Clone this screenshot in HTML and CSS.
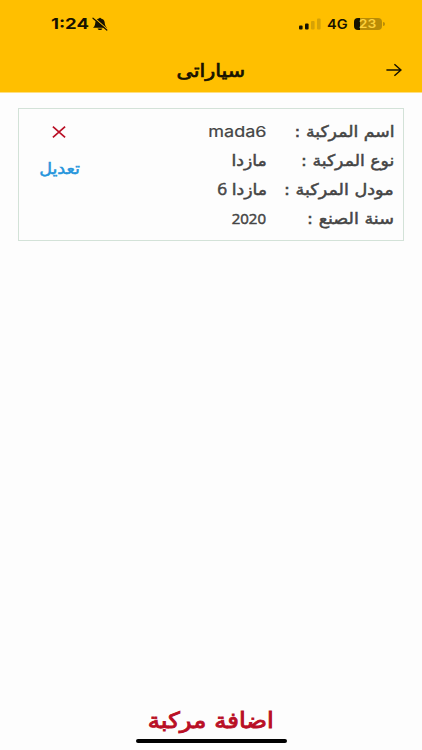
FILE: index.html
```html
<!DOCTYPE html>
<html lang="ar" dir="rtl">
<head>
    <meta charset="UTF-8">
    <meta name="viewport" content="width=device-width, initial-scale=1.0">
    <title>سياراتى</title>
    <link rel="stylesheet" href="styles.css">
</head>
<body>
    <header class="header">
        <div class="status-bar" dir="ltr">
            <div class="status-left">
                <span class="time">1:24</span>
                <svg class="bell" width="16" height="14" viewBox="0 0 16 14">
                    <path d="M1 10.8 C3.2 8.8 3 7.5 3.4 5 C3.8 2.8 5.8 1.9 7 1.6 C7.2 .3 8.8 .3 9 1.6 C10.5 1.9 12.2 3 12.6 5 C13 7.5 12.8 8.8 15 10.8 Z M5.6 11.6 H10.4 C9.8 13.6 6.2 13.6 5.6 11.6 Z" fill="#171200"/>
                    <path d="M2 .8 L15.2 12.2" stroke="#ffbf00" stroke-width="1.2"/>
                    <path d="M1 1.2 L14.8 13" stroke="#171200" stroke-width="1.2" stroke-linecap="round"/>
                </svg>
            </div>
            <div class="status-right">
                <svg class="signal" width="22" height="12" viewBox="0 0 22 12">
                    <rect x="0" y="7.4" width="3.6" height="4" rx="1" fill="#171200"/>
                    <rect x="6" y="5.4" width="3.6" height="6" rx="1" fill="#171200"/>
                    <rect x="12" y="3" width="3.6" height="8.4" rx="1" fill="#d6a205"/>
                    <rect x="18" y=".6" width="3.6" height="10.8" rx="1" fill="#d6a205"/>
                </svg>
                <span class="network">4G</span>
                <div class="battery"><span class="battery-text">23</span></div>
                <div class="battery-tip"></div>
            </div>
        </div>
        <div class="title-bar">
            <svg class="back" width="16" height="14" viewBox="0 0 16 14">
                <path d="M.4 7 H15 M8.4 1.2 L15 7 L8.4 12.8" fill="none" stroke="#171200" stroke-width="1.5"/>
            </svg>
            <h1 class="title"><span>سياراتى</span></h1>
        </div>
    </header>

    <main class="content">
        <div class="car-card">
            <div class="car-info">
                <div class="label"><span>اسم المركبة :</span></div>
                <div class="value"><span class="car-name">mada6</span></div>
                <div class="label"><span>نوع المركبة :</span></div>
                <div class="value"><span>مازدا</span></div>
                <div class="label"><span class="wide">مودل المركبة :</span></div>
                <div class="value"><span>مازدا 6</span></div>
                <div class="label"><span class="wide">سنة الصنع :</span></div>
                <div class="value"><span class="car-year">2020</span></div>
            </div>
            <div class="actions">
                <svg class="delete" width="14" height="12" viewBox="0 0 14 12">
                    <path d="M.9 .7 L13.1 11.3 M13.1 .7 L.9 11.3" stroke="#b90f25" stroke-width="1.7"/>
                </svg>
                <a class="edit"><span>تعديل</span></a>
            </div>
        </div>
    </main>

    <footer class="footer">
        <a class="add-car"><span>اضافة مركبة</span></a>
        <div class="home-indicator"></div>
    </footer>
</body>
</html>
```
FILE: styles.css
```css
* {
    box-sizing: border-box;
    margin: 0;
    padding: 0;
}

body {
    height: 750px;
    display: flex;
    flex-direction: column;
    background-color: #fdfdfd;
    color: #454545;
    font-family: "DejaVu Sans", sans-serif;
    overflow: hidden;
}

span {
    display: inline-block;
    white-space: nowrap;
}

.header {
    height: 93px;
    background-color: #ffbf00;
    border-bottom: 1px solid #ffdf80;
    color: #171200;
}

.status-bar {
    height: 47px;
    padding: 0 37px 0 51px;
    display: flex;
    justify-content: space-between;
    align-items: center;
    font-family: Inter, sans-serif;
}

.status-left,
.status-right {
    display: flex;
    align-items: center;
}

.time {
    width: 41px;
    font-size: 15px;
    font-weight: 700;
    transform: scaleX(1.23);
    transform-origin: left;
}

.network {
    width: 27px;
    margin-left: 6px;
    font-size: 13px;
    font-weight: 600;
    transform: scaleX(1.12);
    transform-origin: left;
}

.battery {
    width: 28px;
    height: 12px;
    border-radius: 4px;
    background: linear-gradient(to right, #171200 6px, #b98c06 6px);
    color: #ffd23c;
    font-size: 12px;
    font-weight: 600;
    line-height: 12px;
    text-align: center;
}

.battery-text {
    transform: scaleX(1.15);
}

.battery-tip {
    width: 2px;
    height: 4px;
    margin-left: 1px;
    border-radius: 0 2px 2px 0;
    background-color: #b98c06;
}

.title-bar {
    height: 45px;
    padding: 0 20px;
    display: grid;
    grid-template-columns: 16px 1fr 16px;
    align-items: center;
}

.title {
    padding-top: 3px;
    font-size: 18px;
    font-weight: 400;
    line-height: 24px;
    text-align: center;
    -webkit-text-stroke: 0.7px;
}

.title span {
    transform: scaleX(1.15);
}

.content {
    flex: 1;
    padding: 15px 18px;
}

.car-card {
    height: 133px;
    padding: 8px 9px 0 19px;
    display: flex;
    justify-content: space-between;
    border: 1px solid #d3e2d8;
}

.car-info {
    display: grid;
    grid-template-columns: 127px 100px;
    grid-auto-rows: 29px;
    font-size: 16px;
    line-height: 29px;
    -webkit-text-stroke: 0.5px;
}

.label span,
.value span {
    transform: scaleX(1.08);
    transform-origin: right;
}

.label .wide {
    transform: scaleX(1.1);
}

.value {
    font-family: "Open Sans", "DejaVu Sans", sans-serif;
}

.value .car-name {
    margin-right: 1px;
    font-family: Inter, sans-serif;
    font-size: 15px;
    transform: scaleX(1.2);
    -webkit-text-stroke: 0.2px;
}

.value .car-year {
    margin-right: 1px;
    font-size: 15px;
    transform: none;
}

.actions {
    width: 42px;
    display: flex;
    flex-direction: column;
    align-items: center;
    padding-top: 9px;
}

.edit {
    margin-top: 19px;
    margin-left: 2px;
    color: #2595dc;
    font-size: 16px;
    line-height: 24px;
    -webkit-text-stroke: 0.5px;
}

.edit span {
    transform: scaleX(1.1);
}

.footer {
    display: flex;
    flex-direction: column;
    align-items: center;
    padding-bottom: 7px;
}

.add-car {
    margin-bottom: 2px;
    color: #b90f25;
    font-size: 22px;
    line-height: 32px;
    -webkit-text-stroke: 0.9px;
}

.add-car span {
    transform: scaleX(1.11);
}

.home-indicator {
    width: 151px;
    height: 4px;
    border-radius: 2px;
    background-color: #000;
}
```
